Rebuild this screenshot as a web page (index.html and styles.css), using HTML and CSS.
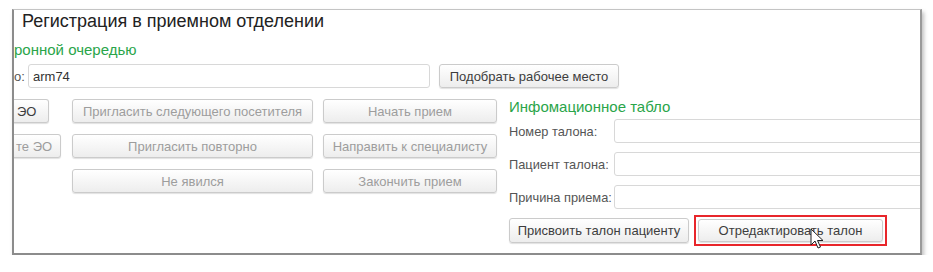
FILE: index.html
```html
<!DOCTYPE html>
<html lang="ru">
<head>
  <meta charset="UTF-8">
  <title>Регистрация в приемном отделении</title>
  <link rel="stylesheet" href="styles.css">
</head>
<body>

  <!-- Окно формы -->
  <div class="window">
    <h1 class="title">Регистрация в приемном отделении</h1>

    <div class="group-title cut">ронной очередью</div>

    <div class="place-row">
      <span class="label cut">о:</span>
      <input class="field place-field" type="text" value="arm74">
      <button class="btn btn-active place-btn">Подобрать рабочее место</button>
    </div>

    <div class="main">
      <!-- Кнопки электронной очереди -->
      <div class="queue">
        <button class="btn btn-active cut-btn eo-1">ЭО</button>
        <button class="btn">Пригласить следующего посетителя</button>
        <button class="btn">Начать прием</button>

        <button class="btn cut-btn eo-2">те ЭО</button>
        <button class="btn">Пригласить повторно</button>
        <button class="btn">Направить к специалисту</button>

        <span></span>
        <button class="btn">Не явился</button>
        <button class="btn">Закончить прием</button>
      </div>

      <!-- Информационное табло -->
      <div class="board">
        <div class="group-title board-title">Инфомационное табло</div>
        <div class="board-row">
          <span class="label">Номер талона:</span>
          <input class="field" type="text">
        </div>
        <div class="board-row">
          <span class="label">Пациент талона:</span>
          <input class="field" type="text">
        </div>
        <div class="board-row">
          <span class="label">Причина приема:</span>
          <input class="field" type="text">
        </div>
        <div class="board-actions">
          <button class="btn btn-active assign-btn">Присвоить талон пациенту</button>
          <div class="highlight">
            <button class="btn btn-active edit-btn">Отредактировать талон</button>
          </div>
        </div>
      </div>
    </div>

    <!-- Указатель мыши -->
    <svg class="cursor" width="14" height="22" viewBox="0 0 14 22">
      <path d="M1 1 L1 17 L5 13 L8 20 L10.5 19 L7.5 12.5 L13 12.5 Z" fill="#fff" stroke="#222" stroke-width="1" stroke-linejoin="round"/>
    </svg>
  </div>

</body>
</html>
```

FILE: styles.css
```css
body {
  margin: 0;
  padding: 9px 0 0 12px;
  background: #fff;
  font-family: "Liberation Sans", Arial, sans-serif;
  font-size: 13px;
  color: #4a4a4a;
}

.window {
  position: relative;
  box-sizing: border-box;
  width: 910px;
  height: 246px;
  overflow: hidden;
  background: #fff;
  border-top: 1px solid #c4c4c4;
  border-left: 2px solid #8c8c8c;
  border-right: 2px solid #9a9a9a;
  border-bottom: 2px solid #8c8c8c;
  box-shadow: 2px 3px 4px rgba(0, 0, 0, 0.25);
}

.title {
  margin: 0 0 0 8px;
  font-size: 18px;
  font-weight: normal;
  line-height: 22px;
  color: #222;
}

.group-title {
  font-size: 15px;
  line-height: 20px;
  color: #2aa54a;
}

.cut {
  margin-top: 8px;
}

.place-row {
  display: flex;
  align-items: center;
  margin-top: 4px;
  height: 24px;
}

.label {
  color: #555;
  white-space: nowrap;
}

.place-row .label {
  width: 14px;
  margin-top: 0;
}

.field {
  box-sizing: border-box;
  height: 24px;
  padding: 0 4px;
  border: 1px solid #d8d8d8;
  border-radius: 3px;
  background: #fff;
  font-family: inherit;
  font-size: 13px;
  color: #333;
}

.place-field {
  width: 402px;
}

.btn {
  box-sizing: border-box;
  height: 24px;
  padding: 0 6px;
  border: 1px solid #cbcbcb;
  border-radius: 3px;
  background: linear-gradient(#ffffff, #ededed);
  box-shadow: 0 1px 1px rgba(0, 0, 0, 0.12);
  font-family: inherit;
  font-size: 13px;
  color: #9d9d9d;
  white-space: nowrap;
  cursor: default;
}

.btn-active {
  color: #3d3d3d;
}

.place-btn {
  width: 180px;
  margin-left: 9px;
}

.main {
  display: flex;
  margin-top: 11px;
}

.queue {
  display: grid;
  grid-template-columns: 48px 241px 174px;
  column-gap: 10px;
  row-gap: 11px;
  align-content: start;
  flex: none;
}

.cut-btn {
  border-left: none;
  border-radius: 0 3px 3px 0;
  text-align: left;
  padding-left: 3px;
}

.eo-1 {
  width: 35px;
}

.eo-2 {
  width: 47px;
  padding-left: 2px;
}

.board {
  flex: none;
  width: 420px;
  margin-left: 12px;
}

.board-title {
  line-height: 18px;
  margin-top: -1px;
}

.board-row {
  display: flex;
  align-items: center;
  margin-top: 9px;
}

.board-title + .board-row {
  margin-top: 3px;
}

.board-row .label {
  width: 105px;
  flex: none;
  font-size: 12.8px;
}

.board-row .field {
  flex: 1;
}

.board-actions {
  display: flex;
  align-items: center;
  margin-top: 6px;
}

.assign-btn {
  width: 180px;
  height: 25px;
}

.highlight {
  margin-left: 5px;
  padding: 2px;
  border: 2px solid #e8262b;
}

.edit-btn {
  width: 185px;
  height: 23px;
  display: block;
}

.cursor {
  position: absolute;
  left: 796px;
  top: 218px;
}
```
